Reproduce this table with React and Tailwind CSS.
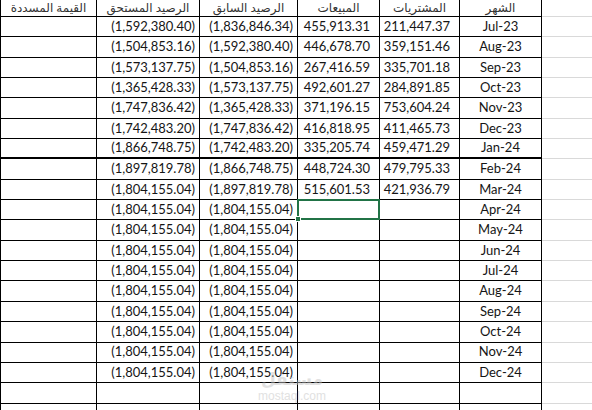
const rows = [
  ['Jul-23', '211,447.37', '455,913.31', '(1,836,846.34)', '(1,592,380.40)'],
  ['Aug-23', '359,151.46', '446,678.70', '(1,592,380.40)', '(1,504,853.16)'],
  ['Sep-23', '335,701.18', '267,416.59', '(1,504,853.16)', '(1,573,137.75)'],
  ['Oct-23', '284,891.85', '492,601.27', '(1,573,137.75)', '(1,365,428.33)'],
  ['Nov-23', '753,604.24', '371,196.15', '(1,365,428.33)', '(1,747,836.42)'],
  ['Dec-23', '411,465.73', '416,818.95', '(1,747,836.42)', '(1,742,483.20)'],
  ['Jan-24', '459,471.29', '335,205.74', '(1,742,483.20)', '(1,866,748.75)'],
  ['Feb-24', '479,795.33', '448,724.30', '(1,866,748.75)', '(1,897,819.78)'],
  ['Mar-24', '421,936.79', '515,601.53', '(1,897,819.78)', '(1,804,155.04)'],
  ['Apr-24', '', '', '(1,804,155.04)', '(1,804,155.04)'],
  ['May-24', '', '', '(1,804,155.04)', '(1,804,155.04)'],
  ['Jun-24', '', '', '(1,804,155.04)', '(1,804,155.04)'],
  ['Jul-24', '', '', '(1,804,155.04)', '(1,804,155.04)'],
  ['Aug-24', '', '', '(1,804,155.04)', '(1,804,155.04)'],
  ['Sep-24', '', '', '(1,804,155.04)', '(1,804,155.04)'],
  ['Oct-24', '', '', '(1,804,155.04)', '(1,804,155.04)'],
  ['Nov-24', '', '', '(1,804,155.04)', '(1,804,155.04)'],
  ['Dec-24', '', '', '(1,804,155.04)', '(1,804,155.04)'],
  ['', '', '', '', ''],
  ['', '', '', '', ''],
]

function Num({ value }) {
  // accounting format: positives leave room for the closing paren
  const neg = value.startsWith('(')
  return (
    <div dir="ltr" className={`flex h-full items-center justify-end ${neg ? 'pr-[4px]' : 'pr-[9px]'}`}>
      {value}
    </div>
  )
}

function Row({ r, thick, selected }) {
  const b = thick ? 'border-b-2' : 'border-b'
  return (
    <div className="flex h-[20.35px]">
      <div className="w-[50px] shrink-0 border-b border-[#d9d9d9]" />
      <div className={`w-[82px] shrink-0 border-r ${b} border-black flex items-center justify-center`}>
        <span dir="ltr">{r[0]}</span>
      </div>
      <div className={`w-[80px] shrink-0 border-r ${b} border-black`}>{r[1] && <Num value={r[1]} />}</div>
      <div className={`relative w-[82px] shrink-0 border-r ${b} border-black`}>
        {r[2] && <Num value={r[2]} />}
        {selected && (
          <div className="absolute inset-[-1px] border-2 border-[#217346]">
            <div className="absolute -left-[4px] -bottom-[4px] h-[6px] w-[6px] border border-white bg-[#217346]" />
          </div>
        )}
      </div>
      <div className={`w-[98px] shrink-0 border-r ${b} border-black`}>{r[3] && <Num value={r[3]} />}</div>
      <div className={`w-[103px] shrink-0 border-r ${b} border-black`}>{r[4] && <Num value={r[4]} />}</div>
      <div className={`w-[97px] shrink-0 border-x ${b} border-black`} />
    </div>
  )
}

export default function App() {
  const heads = ['الشهر', 'المشتريات', 'المبيعات', 'الرصيد السابق', 'الرصيد المستحق', 'القيمة المسددة']
  const widths = ['w-[82px] border-r', 'w-[80px] border-r', 'w-[82px] border-r', 'w-[98px] border-r', 'w-[103px] border-r', 'w-[97px] border-x']
  return (
    <div className="relative h-[410px] w-[592px] overflow-hidden bg-white font-[Lato,'DejaVu_Sans',sans-serif] text-[13px] text-[#151515]">
      <div dir="rtl" className="flex flex-col">
        <div className="flex h-[17px]">
          <div className="w-[50px] shrink-0 border-b border-[#d9d9d9]" />
          {heads.map((h, i) => (
            <div
              key={h}
              className={`${widths[i]} shrink-0 border-b border-black flex items-start justify-center text-[12px] leading-[15px] text-[#333]`}
            >
              {h}
            </div>
          ))}
        </div>
        {rows.map((r, i) => (
          <Row key={i} r={r} thick={i === 6} selected={i === 9} />
        ))}
      </div>

      {/* watermark */}
      <div className="pointer-events-none absolute left-[258px] top-[370px] flex flex-col items-center leading-none text-[#c4c4c4] opacity-50">
        <span className="text-[17px] font-bold">مستقل</span>
        <span className="mt-[3px] text-[12px] font-[Arial,'Liberation_Sans',sans-serif]">mostaql.com</span>
      </div>
    </div>
  )
}
